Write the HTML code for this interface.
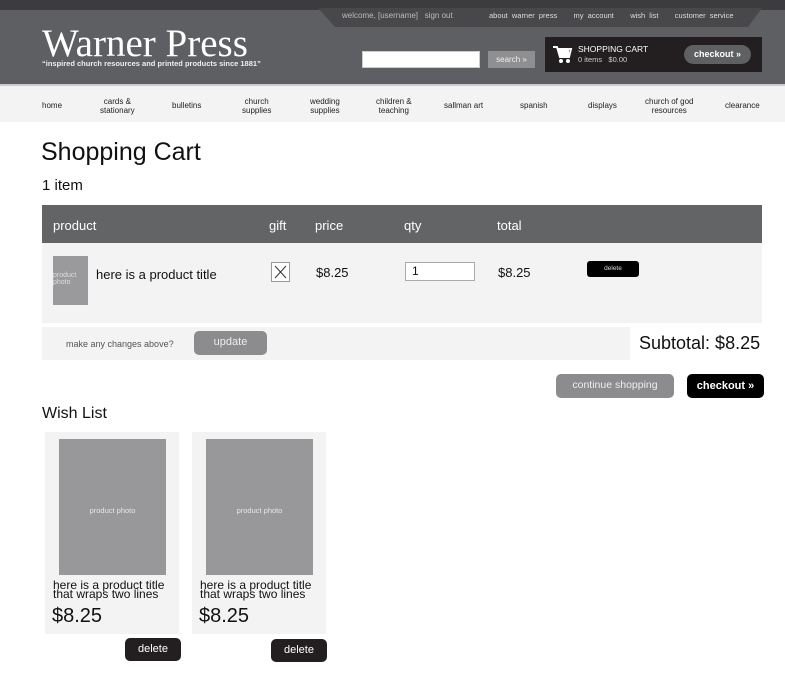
<!DOCTYPE html>
<html><head><meta charset="utf-8"><style>
*{margin:0;padding:0;box-sizing:border-box}
body{width:785px;height:683px;background:#fff;font-family:"Liberation Sans",sans-serif;position:relative;overflow:hidden;color:#111}
.a{position:absolute;white-space:nowrap}
.nav{font-size:8px;color:#222;text-align:center;line-height:9px;position:absolute;top:97px}
</style></head><body>
<div class="a" style="left:0;top:0;width:785px;height:86px;background:#5e5f62"></div>
<div class="a" style="left:0;top:0;width:785px;height:10px;background:#3c3c3e"></div>
<svg class="a" style="left:0;top:0" width="785" height="30"><polygon points="318,8 335,27 748,27 762,8" fill="#48484b"/></svg>
<div class="a" style="top:11px;left:342px;font-size:8px;color:#bbb">welcome, [username] &nbsp; sign out</div>
<div class="a" style="top:11px;left:489px;font-size:7.5px;color:#ddd;word-spacing:2px">about warner press &nbsp;&nbsp; my account &nbsp;&nbsp; wish list &nbsp;&nbsp; customer service</div>
<div class="a" style="top:21px;left:42px;font-family:'Liberation Serif',serif;font-size:39px;color:#fff;letter-spacing:0px">Warner Press</div>
<div class="a" style="top:59px;left:42px;font-size:7.5px;font-weight:bold;color:#eee">“inspired church resources and printed products since 1881”</div>
<div class="a" style="left:362px;top:51px;width:118px;height:17px;background:#fff;border:1px solid #ccc"></div>
<div class="a" style="left:488px;top:51px;width:47px;height:17px;background:#8f8f91;color:#eee;font-size:8px;text-align:center;line-height:17px">search »</div>
<div class="a" style="left:545px;top:37px;width:217px;height:35px;background:#231f20"></div>
<svg class="a" style="left:553px;top:45px" width="20" height="20" viewBox="0 0 20 20"><path d="M0 2h4l3 10h9l2-8H5" fill="none" stroke="#fff" stroke-width="2"/><rect x="6" y="5" width="10" height="6" fill="#fff"/><circle cx="8" cy="16" r="2" fill="#fff"/><circle cx="15" cy="16" r="2" fill="#fff"/></svg>
<div class="a" style="left:578px;top:44px;font-size:8.5px;color:#fff">SHOPPING CART</div>
<div class="a" style="left:578px;top:55px;font-size:7.5px;color:#ccc">0 items &nbsp; $0.00</div>
<div class="a" style="left:684px;top:45px;width:67px;height:19px;background:#5f6062;border-radius:10px;color:#fff;font-size:9px;font-weight:bold;text-align:center;line-height:19px">checkout »</div>
<div class="a" style="left:0;top:84px;width:785px;height:2px;background:#ccc"></div>
<div class="a" style="left:0;top:86px;width:785px;height:36px;background:#f3f3f3"></div>
<div class="nav" style="left:42px;top:101px">home</div>
<div class="nav" style="left:100px">cards &amp;<br>stationary</div>
<div class="nav" style="left:172px;top:101px">bulletins</div>
<div class="nav" style="left:242px">church<br>supplies</div>
<div class="nav" style="left:310px">wedding<br>supplies</div>
<div class="nav" style="left:376px">children &amp;<br>teaching</div>
<div class="nav" style="left:444px;top:101px">sallman art</div>
<div class="nav" style="left:520px;top:101px">spanish</div>
<div class="nav" style="left:588px;top:101px">displays</div>
<div class="nav" style="left:645px">church of god<br>resources</div>
<div class="nav" style="left:725px;top:101px">clearance</div>
<div class="a" style="left:41px;top:138px;font-size:25px;color:#111">Shopping Cart</div>
<div class="a" style="left:42px;top:177px;font-size:15px">1 item</div>
<div class="a" style="left:42px;top:205px;width:720px;height:38px;background:#636466"></div>
<div class="a" style="left:53px;top:218px;font-size:13px;color:#fff">product</div>
<div class="a" style="left:269px;top:218px;font-size:13px;color:#fff">gift</div>
<div class="a" style="left:315px;top:218px;font-size:13px;color:#fff">price</div>
<div class="a" style="left:404px;top:218px;font-size:13px;color:#fff">qty</div>
<div class="a" style="left:497px;top:218px;font-size:13px;color:#fff">total</div>
<div class="a" style="left:42px;top:243px;width:720px;height:80px;background:#f3f3f3"></div>
<div class="a" style="left:53px;top:256px;width:35px;height:49px;background:#9a9a9c;color:#ddd;font-size:7px;line-height:7px;padding-top:16px">product<br>photo</div>
<div class="a" style="left:96px;top:267px;font-size:13px">here is a product title</div>
<svg class="a" style="left:271px;top:262px" width="19" height="20"><rect x="0.5" y="0.5" width="18" height="19" fill="#fff" stroke="#999"/><path d="M4 4L15 16M15 4L4 16" stroke="#333" stroke-width="1"/></svg>
<div class="a" style="left:316px;top:265px;font-size:13px">$8.25</div>
<div class="a" style="left:405px;top:262px;width:70px;height:19px;border:1px solid #aaa;background:#fff;font-size:12px;padding-left:6px;line-height:17px">1</div>
<div class="a" style="left:498px;top:265px;font-size:13px">$8.25</div>
<div class="a" style="left:587px;top:261px;width:52px;height:16px;background:#000;border-radius:3px;color:#ddd;font-size:6.5px;text-align:center;line-height:16px">delete</div>
<div class="a" style="left:42px;top:327px;width:588px;height:33px;background:#f3f3f3"></div>
<div class="a" style="left:66px;top:339px;font-size:9px;color:#555">make any changes above?</div>
<div class="a" style="left:194px;top:331px;width:73px;height:24px;background:#8c8c8e;border-radius:5px;color:#eee;font-size:11px;text-align:center;line-height:22px">update</div>
<div class="a" style="left:639px;top:333px;font-size:18px">Subtotal: $8.25</div>
<div class="a" style="left:556px;top:374px;width:118px;height:24px;background:#8c8c8e;border-radius:5px;color:#eee;font-size:10.5px;text-align:center;line-height:22px">continue shopping</div>
<div class="a" style="left:687px;top:374px;width:77px;height:24px;background:#000;border-radius:5px;color:#fff;font-size:11px;font-weight:bold;text-align:center;line-height:24px">checkout »</div>
<div class="a" style="left:42px;top:405px;font-size:16px">Wish List</div>
<div class="a" style="left:45px;top:432px;width:134px;height:202px;background:#f3f3f3"></div>
<div class="a" style="left:59px;top:439px;width:107px;height:136px;background:#98989a;color:#e6e6e6;font-size:7.5px;text-align:center;line-height:144px">product photo</div>
<div class="a" style="left:53px;top:581px;font-size:12px;line-height:9px">here is a product title<br>that wraps two lines</div>
<div class="a" style="left:52px;top:605px;font-size:20px">$8.25</div>
<div class="a" style="left:125px;top:638px;width:56px;height:23px;background:#231f20;border-radius:5px;color:#fff;font-size:11px;text-align:center;line-height:22px">delete</div>
<div class="a" style="left:192px;top:432px;width:134px;height:202px;background:#f3f3f3"></div>
<div class="a" style="left:206px;top:439px;width:107px;height:136px;background:#98989a;color:#e6e6e6;font-size:7.5px;text-align:center;line-height:144px">product photo</div>
<div class="a" style="left:200px;top:581px;font-size:12px;line-height:9px">here is a product title<br>that wraps two lines</div>
<div class="a" style="left:199px;top:605px;font-size:20px">$8.25</div>
<div class="a" style="left:271px;top:639px;width:56px;height:23px;background:#231f20;border-radius:5px;color:#fff;font-size:11px;text-align:center;line-height:22px">delete</div>
</body></html>
